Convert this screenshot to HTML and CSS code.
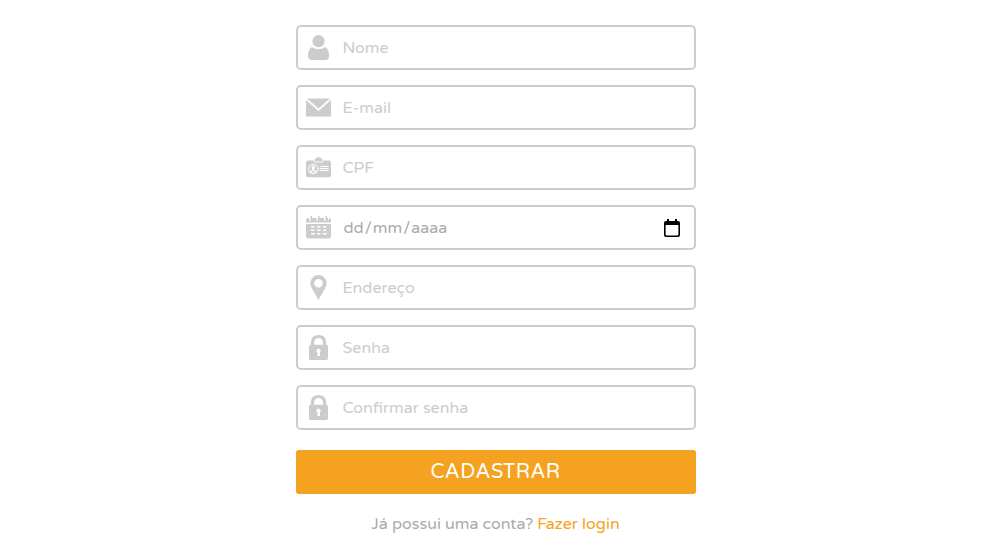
FILE: index.html
```
<!DOCTYPE html>
<html lang="pt-BR">
<head>
<meta charset="utf-8">
<title>Cadastro</title>
<link rel="stylesheet" href="styles.css">
</head>
<body>
<form class="form">
  <label class="field">
    <svg class="icon" viewBox="0 0 25 25"><circle cx="12.5" cy="6.2" r="6.1"/><path d="M6 12Q9 14.2 12.5 14.2T19 12Q23 14 23 20.500Q23 25 19.500 25H5.500Q2 25 2 20.500Q2 14 6 12Z"/></svg>
    <input class="input" type="text" placeholder="Nome">
  </label>
  <label class="field">
    <svg class="icon" viewBox="0 0 25 25"><path d="M1 3.500H24L12.500 13.500ZM0 5L12.500 16L25 5V21.500H0Z"/></svg>
    <input class="input" type="text" placeholder="E-mail">
  </label>
  <label class="field">
    <svg class="icon" viewBox="0 0 25 25"><path d="M8.500 5.500V4.500Q8.500 3.800 10 3.500Q10.500 2.300 12.500 2.300T15 3.500Q16.500 3.800 16.500 4.500V5.500Q16.500 6.500 15.500 6.500H9.500Q8.500 6.500 8.500 5.500Z"/><path d="M2 5.500H7.500Q7.500 7.600 9.500 7.600H15.500Q17.500 7.600 17.500 5.500H23Q25 5.500 25 7.500V20.200Q25 22.200 23 22.200H2Q0 22.200 0 20.200V7.500Q0 5.500 2 5.500Z"/><circle class="line" cx="7.200" cy="13.800" r="4.600"/><path class="line" d="M13.500 11.500H22.500M13.500 13.500H22.500M13.500 15.500H22.500"/><path class="hole" d="M4 16.500L6.500 14.500Q5 12.800 5.500 11.300Q7.200 9.500 8.900 11.300Q9.400 12.800 7.900 14.500L10.400 16.500L9.500 17.500L7.200 15.500L4.900 17.500Z"/></svg>
    <input class="input" type="text" placeholder="CPF">
  </label>
  <label class="field">
    <svg class="icon" viewBox="0 0 25 25"><path d="M2 3H23Q25 3 25 5V7.500H0V5Q0 3 2 3ZM0 9H25V21.500Q25 23.500 23 23.500H2Q0 23.500 0 21.500Z"/><path class="hole" d="M3 1H5V5.500H3ZM10.500 1H12.500V5.500H10.500ZM18 1H20V5.500H18ZM22 1H23V5H22Z"/><path d="M4.500 1H6V5H4.500ZM12 1H13.500V5H12ZM19.500 1H21V5H19.500Z"/><path class="hole" d="M5 11H8.500V12.500H5ZM11 11H14.500V12.500H11ZM17 11H20.500V12.500H17ZM5 14.500H8.500V16H5ZM11 14.500H14.500V16H11ZM17 14.500H20.500V16H17ZM5 18H8.500V19.500H5ZM11 18H14.500V19.500H11ZM17 18H20.500V19.500H17Z"/></svg>
    <span class="input date">dd<span class="slash">/</span>mm<span class="slash">/</span>aaaa</span>
    <svg class="picker" viewBox="0 0 16 18"><path d="M2 2H3V0H5V2H11V0H13V2H14Q16 2 16 4V16Q16 18 14 18H2Q0 18 0 16V4Q0 2 2 2ZM1.600 6V15.600Q1.600 16.400 2.400 16.400H13.600Q14.400 16.400 14.400 15.600V6Z"/></svg>
  </label>
  <label class="field">
    <svg class="icon" viewBox="0 0 25 25"><path fill-rule="evenodd" d="M12.500 0A8.200 8.200 0 0 1 20.700 8.200C20.700 12 16 18 12.500 25C9 18 4.300 12 4.300 8.200A8.200 8.200 0 0 1 12.500 0ZM12.500 3.900A4.300 4.300 0 1 0 12.500 12.500A4.300 4.300 0 1 0 12.500 3.900Z"/></svg>
    <input class="input" type="text" placeholder="Endereço">
  </label>
  <label class="field">
    <svg class="icon" viewBox="0 0 25 25"><path d="M4.800 10V7.300Q5.300 0 12.500 0T20.200 7.300V10H17V7.500Q16.500 3 12.500 3T8 7.500V10Z"/><rect x="3" y="9.800" width="19" height="15.200" rx="1.700"/><path class="hole" d="M12.500 13.700A2 2 0 0 1 14 17.200V21H11.500V17.500A2 2 0 0 1 12.500 13.700Z"/></svg>
    <input class="input" type="password" placeholder="Senha">
  </label>
  <label class="field">
    <svg class="icon" viewBox="0 0 25 25"><path d="M4.800 10V7.300Q5.300 0 12.500 0T20.200 7.300V10H17V7.500Q16.500 3 12.500 3T8 7.500V10Z"/><rect x="3" y="9.800" width="19" height="15.200" rx="1.700"/><path class="hole" d="M12.500 13.700A2 2 0 0 1 14 17.200V21H11.500V17.500A2 2 0 0 1 12.500 13.700Z"/></svg>
    <input class="input" type="password" placeholder="Confirmar senha">
  </label>
  <button class="submit" type="button">CADASTRAR</button>
  <p class="login">Já possui uma conta? <a class="link">Fazer login</a></p>
</form>
</body>
</html>
```
FILE: styles.css
```
* { box-sizing: border-box; }
body {
  margin: 0;
  background: #fff;
  font-family: "Varela Round", "Noto Sans", sans-serif;
  font-size: 16px;
}
.form {
  width: 400px;
  margin: 25px 0 0 296px;
}
.field {
  display: flex;
  align-items: center;
  height: 45px;
  margin-bottom: 15px;
  padding: 0 14px 0 8px;
  border: 2px solid #ccc;
  border-radius: 5px;
}
.icon {
  flex: none;
  width: 25px;
  height: 25px;
  fill: #ccc;
}
.icon .hole { fill: #fff; }
.icon .line { fill: none; stroke: #fff; stroke-width: 1.1; }
.input {
  flex: 1;
  min-width: 0;
  height: 22px;
  margin-left: 11.5px;
  padding: 0;
  border: 0;
  outline: 0;
  background: transparent;
  font: inherit;
  line-height: 22px;
  color: #aaa;
}
.input::placeholder { color: #ccc; opacity: 1; }
.date { margin-left: 12.5px; }
.slash { padding: 0 1px; }
.picker { flex: none; width: 16px; height: 18px; fill: #000; }
.submit {
  display: block;
  width: 100%;
  height: 44px;
  margin: 20px 0 0;
  padding: 0 1px 0 0;
  border: 0;
  border-radius: 3px;
  background: #f6a221;
  color: #fff;
  font-family: inherit;
  font-size: 20px;
  letter-spacing: 0.5px;
}
.login {
  margin: 19px 0 0;
  padding-right: 1px;
  line-height: 22px;
  text-align: center;
  color: #aaa;
}
.link { color: #f6a221; }
```
